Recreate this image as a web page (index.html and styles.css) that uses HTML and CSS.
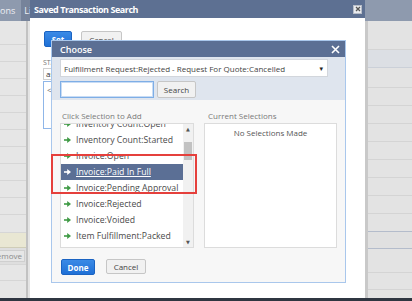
FILE: index.html
```html
<!DOCTYPE html>
<html>
<head>
<meta charset="utf-8">
<link rel="stylesheet" href="styles.css">
</head>
<body>
<div class="page">
  <div class="topbar">
    <span class="tab">ons</span>
    <span class="tab dark">Li</span>
  </div>
  <div class="content">
    <div class="leftcol">
      <div class="lrow h24"></div>
      <div class="lrow h17"></div>
      <div class="lrow h17"></div>
      <div class="lrow h17"></div>
      <div class="lrow h17"></div>
      <div class="lrow h17"></div>
      <div class="lrow h17"></div>
      <div class="lrow h17"></div>
      <div class="lrow h17"></div>
      <div class="lrow h17"></div>
      <div class="lrow h17"></div>
      <div class="lrow h18"></div>
      <div class="lrow h15 yellow"></div>
      <div class="lrow h17 btnrow"><span class="remove">Remove</span></div>
      <div class="lrow h16"></div>
      <div class="lrow fill"></div>
    </div>
    <div class="mid"></div>
    <div class="rightcol">
      <div class="rrow h29"></div>
      <div class="rrow h18 blue"></div>
      <div class="rrow h20"></div>
      <div class="rrow h18"></div>
      <div class="rrow h18"></div>
      <div class="rrow h18"></div>
      <div class="rrow h18"></div>
      <div class="rrow h18"></div>
      <div class="rrow h18"></div>
      <div class="rrow h18"></div>
      <div class="rrow h18 sel"></div>
      <div class="rrow h17 selrow"></div>
      <div class="rrow h24"></div>
      <div class="rrow h17"></div>
      <div class="rrow fill"></div>
    </div>
  </div>
  <div class="footer"></div>
</div>

<div class="dialog outer">
  <div class="outer-header">
    <span class="outer-title">Saved Transaction Search</span>
    <span class="outer-close"><svg width="6" height="6" viewBox="0 0 6 6"><path d="M1 1L5 5M5 1L1 5" stroke="#555" stroke-width="1.3"/></svg></span>
  </div>
  <div class="outer-body">
    <div class="outer-actions">
      <span class="btn primary set">Set</span>
      <span class="btn secondary ocancel">Cancel</span>
    </div>
    <div class="field-label">STATUS</div>
    <div class="field-input">as</div>
    <div class="field-area">&lt;Type then tab&gt;</div>
  </div>

  <div class="dialog inner">
    <div class="inner-header">
      <span class="inner-title">Choose</span>
      <svg class="inner-close" width="9" height="9" viewBox="0 0 9 9"><path d="M1 1L8 8M8 1L1 8" stroke="#fff" stroke-width="1.6"/></svg>
    </div>
    <div class="inner-top">
      <div class="select">
        <span>Fulfillment Request:Rejected - Request For Quote:Cancelled</span>
        <span class="caret">&#9662;</span>
      </div>
      <div class="search-row">
        <span class="search-input"></span>
        <span class="btn secondary search-btn">Search</span>
      </div>
    </div>
    <div class="inner-main">
      <div class="columns">
        <div class="col">
          <div class="col-label">Click Selection to Add</div>
          <div class="listbox">
            <div class="items">
              <div class="item"><svg class="arr" width="7" height="6" viewBox="0 0 7 6"><path d="M0 3H4" stroke="currentColor" stroke-width="1.6"/><path d="M3.2 0L7 3L3.2 6Z" fill="currentColor"/></svg>Inventory Count:Open</div>
              <div class="item"><svg class="arr" width="7" height="6" viewBox="0 0 7 6"><path d="M0 3H4" stroke="currentColor" stroke-width="1.6"/><path d="M3.2 0L7 3L3.2 6Z" fill="currentColor"/></svg>Inventory Count:Started</div>
              <div class="item"><svg class="arr" width="7" height="6" viewBox="0 0 7 6"><path d="M0 3H4" stroke="currentColor" stroke-width="1.6"/><path d="M3.2 0L7 3L3.2 6Z" fill="currentColor"/></svg>Invoice:Open</div>
              <div class="item active"><svg class="arr" width="7" height="6" viewBox="0 0 7 6"><path d="M0 3H4" stroke="currentColor" stroke-width="1.6"/><path d="M3.2 0L7 3L3.2 6Z" fill="currentColor"/></svg><span class="u">Invoice:Paid In Full</span></div>
              <div class="item"><svg class="arr" width="7" height="6" viewBox="0 0 7 6"><path d="M0 3H4" stroke="currentColor" stroke-width="1.6"/><path d="M3.2 0L7 3L3.2 6Z" fill="currentColor"/></svg>Invoice:Pending Approval</div>
              <div class="item"><svg class="arr" width="7" height="6" viewBox="0 0 7 6"><path d="M0 3H4" stroke="currentColor" stroke-width="1.6"/><path d="M3.2 0L7 3L3.2 6Z" fill="currentColor"/></svg>Invoice:Rejected</div>
              <div class="item"><svg class="arr" width="7" height="6" viewBox="0 0 7 6"><path d="M0 3H4" stroke="currentColor" stroke-width="1.6"/><path d="M3.2 0L7 3L3.2 6Z" fill="currentColor"/></svg>Invoice:Voided</div>
              <div class="item"><svg class="arr" width="7" height="6" viewBox="0 0 7 6"><path d="M0 3H4" stroke="currentColor" stroke-width="1.6"/><path d="M3.2 0L7 3L3.2 6Z" fill="currentColor"/></svg>Item Fulfillment:Packed</div>
              <div class="item"><svg class="arr" width="7" height="6" viewBox="0 0 7 6"><path d="M0 3H4" stroke="currentColor" stroke-width="1.6"/><path d="M3.2 0L7 3L3.2 6Z" fill="currentColor"/></svg>Item Fulfillment:Picked</div>
            </div>
            <div class="scrollbar">
              <span class="sb-arrow">&#9650;</span>
              <span class="sb-track"><span class="sb-thumb"></span></span>
              <span class="sb-arrow">&#9660;</span>
            </div>
          </div>
        </div>
        <div class="col">
          <div class="col-label right">Current Selections</div>
          <div class="selbox">No Selections Made</div>
        </div>
      </div>
      <div class="inner-actions">
        <span class="btn primary done">Done</span>
        <span class="btn secondary icancel">Cancel</span>
      </div>
    </div>
    <div class="highlight-box"></div>
  </div>
</div>
</body>
</html>
```

FILE: styles.css
```css
* { box-sizing: border-box; }
html, body { margin: 0; padding: 0; }
body {
  width: 412px;
  height: 301px;
  overflow: hidden;
  position: relative;
  font-family: "Open Sans", "DejaVu Sans", sans-serif;
  background: #e4e4e4;
}

/* background page */
.page { display: flex; flex-direction: column; height: 301px; }
.topbar {
  height: 21px;
  background: #8e9aae;
  display: flex;
  align-items: stretch;
}
.tab {
  color: #eef0f4;
  font-size: 9px;
  line-height: 21px;
  padding: 0 6px 0 0;
}
.tab.dark { background: #76839a; padding: 0 6px 0 3px; }
.content { flex: 1; display: flex; }
.leftcol { width: 28px; display: flex; flex-direction: column; background: #e6e6e6; border-right: 2px solid #c2c2c2; }
.mid { flex: 1; }
.rightcol { width: 47px; display: flex; flex-direction: column; background: #e3e3e3; border-left: 3px solid #c9c9c9; }
.lrow { border-bottom: 1px solid #d6d6d6; }
.rrow { border-bottom: 1px solid #d4d4d4; }
.h15 { height: 15px; } .h16 { height: 16px; } .h17 { height: 17px; } .h18 { height: 18px; }
.h20 { height: 20px; } .h22 { height: 22px; } .h24 { height: 24px; } .h29 { height: 29px; }
.fill { flex: 1; border-bottom: 0; }
.yellow { background: #e9e7d3; border-bottom-color: #cfcdb8; }
.btnrow { display: flex; align-items: center; justify-content: flex-end; background: #dedede; }
.remove {
  font-size: 8px; color: #8a8a8a; background: #e6e6e6; border: 1px solid #cfcfcf;
  line-height: 10px; padding: 0 2px; margin-right: 1px;
}
.rrow.blue { background: #dcdfe4; border-bottom-color: #cbd0d8; }
.rrow.sel { border-bottom-color: #b4bccb; }
.rrow.selrow { background: #e0e0e0; border-bottom-color: #b4bccb; }
.footer { height: 3px; background: #2f3641; }

/* dialogs */
.dialog { position: absolute; }
.outer {
  left: 30px; top: -4px; width: 335px; height: 302px;
  background: #fff;
}
.outer-header {
  height: 22px;
  background: #5d7092;
  display: flex; align-items: center; justify-content: space-between;
  padding: 4px 3px 0 4px;
}
.outer-title { color: #fff; font-weight: 700; font-size: 9px; letter-spacing: -0.45px; }
.outer-close {
  width: 9px; height: 9px; background: #e9ebef; border: 1px solid #b7bdc8;
  display: flex; align-items: center; justify-content: center;
}
.outer-body { padding: 13px 13px 0 13px; }
.outer-actions { display: flex; gap: 9px; }
.btn {
  display: inline-flex; align-items: center; justify-content: center;
  font-size: 8px; border-radius: 2px;
}
.btn.primary { background: linear-gradient(#3a8ae6, #1f70d6); border: 1px solid #1a63c2; color: #fff; font-weight: 700; }
.btn.secondary { background: #f1f1f1; border: 1px solid #c6c6c6; color: #444; }
.set { width: 28px; height: 16px; margin-left: 1px; }
.ocancel { width: 41px; height: 16px; }
.field-label { font-size: 7px; color: #777; margin-top: 12px; line-height: 8px; }
.field-input { width: 120px; height: 12px; border: 1px solid #d0d0d0; font-size: 8px; line-height: 10px; padding-left: 2px; color: #333; margin-top: 1px; }
.field-area { width: 160px; height: 48px; border: 1px solid #8fb6e8; font-size: 8px; color: #666; padding: 2px 3px; margin-top: 1px; }

.inner {
  left: 21px; top: 44px; width: 295px; height: 243px;
  border: 1px solid #a9c7ec;
  background: #f7f7f7;
  display: flex; flex-direction: column;
}
.inner-header {
  height: 16px; background: #5b6f94;
  display: flex; align-items: center; justify-content: space-between;
  padding: 0 5px 0 8px;
}
.inner-title { color: #fff; font-size: 9px; font-weight: 600; }
.inner-top {
  background: #dfe5ee;
  padding: 2px 17px 2px 8px;
  display: flex; flex-direction: column; gap: 4px;
}
.select {
  height: 18px; background: #fff; border: 1px solid #d2d6dc;
  display: flex; align-items: center; justify-content: space-between;
  padding: 0 4px 0 3px;
  font-size: 8px; color: #444;
}
.caret { font-size: 7px; color: #222; }
.search-row { display: flex; gap: 3px; height: 17px; }
.search-input { width: 94px; background: #fff; border: 1px solid #7eaee6; box-shadow: inset 0 0 0 1px #c8dcf5; }
.search-btn { width: 39px; font-size: 8px; color: #444; }

.inner-main { flex: 1; padding: 10px 8px 0 8px; display: flex; flex-direction: column; }
.columns { display: flex; gap: 10px; }
.col { display: flex; flex-direction: column; }
.col-label { font-size: 8px; color: #7a7a7a; line-height: 12px; margin-bottom: 1px; padding-left: 2px; }
.col-label.right { padding-left: 4px; }
.listbox {
  width: 134px; height: 125px; background: #fff; border: 1px solid #dcdcdc;
  display: flex; overflow: hidden;
}
.items { flex: 1; display: flex; flex-direction: column; margin-top: -8px; }
.item {
  height: 16px; flex: none; display: flex; align-items: center;
  font-size: 8.7px; color: #4a4a4a; padding-left: 3px; gap: 5px;
}
.item .arr { color: #3f9a45; flex: none; }
.item.active { background: #5b6f95; color: #fff; }
.item.active .arr { color: #fff; }
.u { text-decoration: underline; }
.scrollbar { width: 10px; background: #f1f1f1; display: flex; flex-direction: column; align-items: center; }
.sb-arrow { font-size: 5px; color: #555; height: 10px; line-height: 10px; }
.sb-track { flex: 1; width: 100%; display: flex; flex-direction: column; padding: 8px 1px 0 1px; }
.sb-thumb { height: 18px; background: #c2c2c2; }
.selbox {
  width: 133px; height: 125px; background: #fff; border: 1px solid #dcdcdc;
  font-size: 8px; color: #555; text-align: center; padding-top: 3px; line-height: 11px;
}
.inner-actions { display: flex; gap: 11px; margin-top: 11px; padding-left: 1px; }
.done { width: 34px; height: 16px; }
.icancel { width: 40px; height: 15px; }

.highlight-box {
  position: absolute; left: -1px; top: 113px; width: 146px; height: 40px;
  border: 2px solid #e5403c;
}
```
